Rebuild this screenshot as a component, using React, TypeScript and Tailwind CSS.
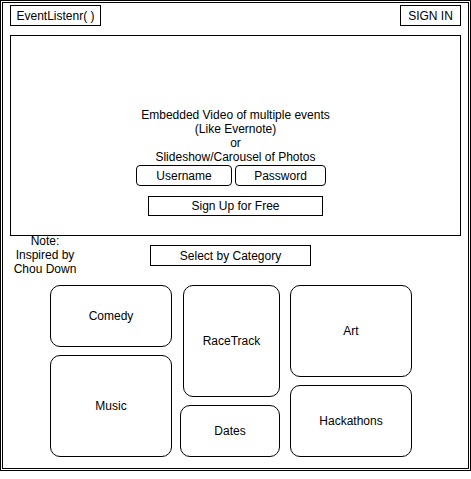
import React from "react";

const font = { fontFamily: '"Liberation Sans", Arial, Helvetica, sans-serif' };

function Card({ label, className }: { label: string; className: string }) {
  return (
    <div
      className={`flex items-center justify-center rounded-[10px] border border-black text-[12px] leading-[14px] text-black ${className}`}
    >
      {label}
    </div>
  );
}

export default function App() {
  return (
    <div className="h-[479px] w-[471px] bg-white" style={font}>
      <div className="h-[471px] w-[471px] border-[3px] border-double border-black">
        <div className="px-[7px] pt-[2px] text-[12px] leading-[14px] text-black">
          {/* header */}
          <div className="flex h-[21px] justify-between">
            <div className="flex w-[91px] items-center justify-center border border-black">
              EventListenr( )
            </div>
            <div className="flex w-[61px] items-center justify-center border border-black">
              SIGN IN
            </div>
          </div>

          {/* video panel */}
          <div className="mt-[9px] flex h-[201px] flex-col border border-black">
            <div className="mt-[72px] flex flex-col items-center text-center">
              <div>Embedded Video of multiple events</div>
              <div>(Like Evernote)</div>
              <div>or</div>
              <div>Slideshow/Carousel of Photos</div>
            </div>
            <div className="mt-[1px] flex gap-[3px] pl-[125px]">
              <div className="flex h-[21px] w-[96px] items-center justify-center rounded-[4px] border border-black">
                Username
              </div>
              <div className="flex h-[21px] w-[91px] items-center justify-center rounded-[4px] border border-black">
                Password
              </div>
            </div>
            <div className="ml-[137px] mt-[10px] flex h-[20px] w-[175px] items-center justify-center border border-black">
              Sign Up for Free
            </div>
          </div>

          {/* note + select */}
          <div className="flex h-[49px]">
            <div className="mt-[-2px] w-[70px] text-center">
              <div>Note:</div>
              <div>Inspired by</div>
              <div>Chou Down</div>
            </div>
            <div className="ml-[70px] mt-[9px] flex h-[21px] w-[161px] items-center justify-center border border-black">
              Select by Category
            </div>
          </div>

          {/* categories */}
          <div className="flex pl-[40px]">
            <div className="flex w-[122px] flex-col gap-[8px]">
              <Card label="Comedy" className="h-[62px] w-[122px]" />
              <Card label="Music" className="h-[102px] w-[122px]" />
            </div>
            <div className="ml-[8px] flex w-[100px] flex-col gap-[8px]">
              <Card label="RaceTrack" className="ml-[3px] h-[112px] w-[97px]" />
              <Card label="Dates" className="h-[52px] w-[100px]" />
            </div>
            <div className="ml-[10px] flex w-[122px] flex-col gap-[8px]">
              <Card label="Art" className="h-[92px] w-[122px]" />
              <Card label="Hackathons" className="h-[72px] w-[122px]" />
            </div>
          </div>
        </div>
      </div>
    </div>
  );
}
